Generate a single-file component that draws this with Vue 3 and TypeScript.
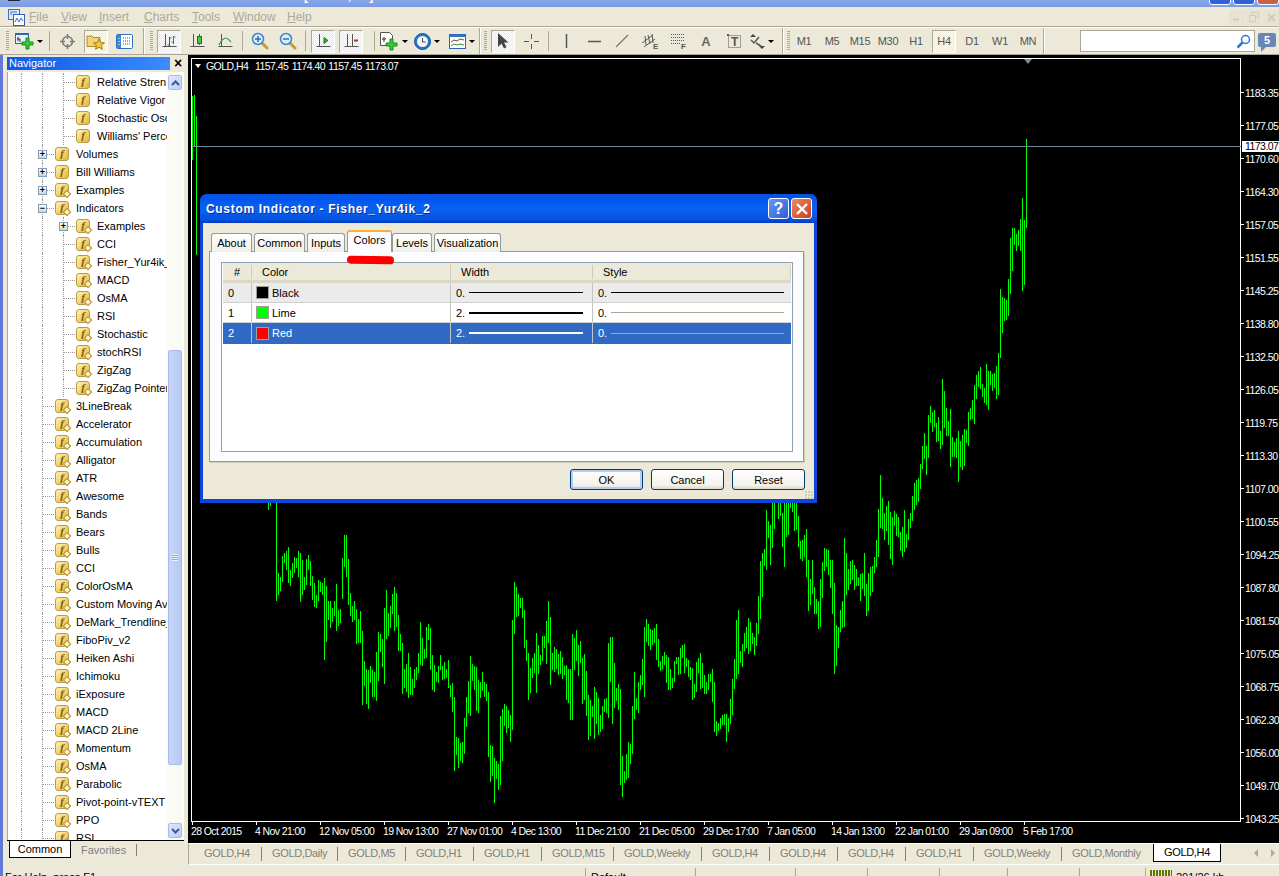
<template>
  <div class="terminal">
    <div class="titlebar">
      <span class="title-icon"></span>
      <span class="title-text">[GOLD,H4]</span>
      <div class="win-btns"><i></i><i></i><i class="red"></i></div>
    </div>

    <div class="menubar">
      <svg class="app-icon" width="17" height="17" viewBox="0 0 17 17">
        <rect x="0.5" y="0.5" width="11" height="10" fill="#dfe9fb" stroke="#3a6fc4" />
        <rect x="5.5" y="5.5" width="11" height="11" fill="#fff" stroke="#2f5fb0" />
        <path d="M7 13l2-4 2 4 2-4 2 3" fill="none" stroke="#2f6fc8" />
        <path d="M2 3h7M2 5h2" stroke="#3a6fc4" />
      </svg>
      <span v-for="m in menus" :key="m" class="menu-item"><u>{{ m[0] }}</u>{{ m.slice(1) }}</span>
      <div class="mdi-btns">
        <span><svg width="8" height="8" viewBox="0 0 8 8"><path d="M0 6.5h6" stroke="#cfccbc" stroke-width="2" /></svg></span>
        <span><svg width="10" height="10" viewBox="0 0 10 10"><path d="M2.5 2.5v-2h7v5h-2M.5 3.5h6v6h-6z" fill="none" stroke="#cfccbc" /></svg></span>
        <span><svg width="9" height="9" viewBox="0 0 9 9"><path d="M1 1l7 7M8 1l-7 7" stroke="#cfccbc" stroke-width="2" /></svg></span>
      </div>
    </div>

    <div class="toolbars">
      <div class="band band-1">
        <span class="grip"></span>
        <span class="tool drop wide-1">
          <svg width="19" height="18" viewBox="0 0 19 18"><rect x="0.5" y="1.5" width="13" height="10" fill="#e8f0fb" stroke="#2c66b8" /><path d="M1 2h12" stroke="#2c66b8" stroke-width="2" /><path d="M3 5v4M5 7v3M2 7h3" stroke="#333" /><path d="M11 6h3v4h4v3h-4v4h-3v-4H7v-3h4z" fill="#3cc63c" stroke="#1a8a1a" /></svg>
          <b class="caret"></b>
        </span>
        <span class="sep"></span>
        <span class="tool">
          <svg width="17" height="17" viewBox="0 0 17 17" fill="none" stroke="#7d7d7d"><circle cx="8.5" cy="8.5" r="5" stroke-width="1.6" /><path d="M8.5 1v5M8.5 11v5M1 8.5h5M11 8.5h5" stroke-width="1.6" /></svg>
        </span>
        <span class="tool on push">
          <svg width="20" height="18" viewBox="0 0 20 18"><path d="M1 4h5l1 1.500h7v9H1z" fill="#f4d372" stroke="#b08a2a" /><path d="M13 7l1.600 3.600 3.900.3-3 2.600.9 3.800-3.400-2-3.400 2 .9-3.800-3-2.600 3.900-.3z" fill="#f2c641" stroke="#a27c1c" /></svg>
        </span>
        <span class="tool">
          <svg width="17" height="15" viewBox="0 0 17 15"><rect x="0.500" y="0.500" width="16" height="14" rx="1" fill="#fff" stroke="#2c6fc0" /><rect x="1" y="1" width="4" height="13" fill="#3a86d8" /><path d="M7 4h7M7 7h7M7 10h7" stroke="#555" stroke-dasharray="1 1" /><path d="M3 4v1M3 7v1M3 10v1" stroke="#fff" /></svg>
        </span>
      </div>
      <span class="divider"></span>
      <div class="band band-2">
        <span class="grip"></span>
        <span class="tool on">
          <svg width="15" height="17" viewBox="0 0 15 17" fill="none"><path d="M3.500 1v13M.5 13.500h14" stroke="#555" /><path d="M7.500 4v9M5.500 12h2M7.500 5h2" stroke="#555" /><path d="M11.500 3v8M9.500 9h2M11.500 4h2" stroke="#1a9a1a" /></svg>
        </span>
        <span class="tool">
          <svg width="15" height="17" viewBox="0 0 15 17" fill="none"><path d="M3.500 1v13M.5 13.500h14" stroke="#555" /><path d="M9.500 1v11" stroke="#555" /><rect x="7.500" y="3.500" width="4" height="7" fill="#46c246" stroke="#1a7a1a" /></svg>
        </span>
        <span class="tool">
          <svg width="15" height="17" viewBox="0 0 15 17" fill="none"><path d="M3.500 1v13M.5 13.500h14" stroke="#555" /><path d="M1 12c3-6 5-7 7-7s3 2 5 4" stroke="#2a9a5a" stroke-width="1.200" /></svg>
        </span>
        <span class="sep"></span>
        <span class="tool">
          <svg width="18" height="18" viewBox="0 0 18 18"><path d="M11 11l5 5" stroke="#c89a30" stroke-width="3" stroke-linecap="round" /><circle cx="7" cy="7" r="5.500" fill="#dcecfb" stroke="#3a86c8" stroke-width="1.500" /><path d="M4 7h6M7 4v6" stroke="#2a6fb8" stroke-width="1.500" /></svg>
        </span>
        <span class="tool">
          <svg width="18" height="18" viewBox="0 0 18 18"><path d="M11 11l5 5" stroke="#c89a30" stroke-width="3" stroke-linecap="round" /><circle cx="7" cy="7" r="5.500" fill="#dcecfb" stroke="#3a86c8" stroke-width="1.500" /><path d="M4 7h6" stroke="#2a6fb8" stroke-width="1.500" /></svg>
        </span>
        <span class="sep"></span>
        <span class="tool on">
          <svg width="15" height="17" viewBox="0 0 15 17" fill="none"><path d="M3.500 1v13M.5 13.500h14" stroke="#555" /><path d="M8 4.500l4 3-4 3z" fill="#35b035" stroke="#1a7a1a" /></svg>
        </span>
        <span class="tool on">
          <svg width="15" height="17" viewBox="0 0 15 17" fill="none"><path d="M3.500 1v13M8.500 1v13M.5 13.500h14" stroke="#555" /><path d="M10 7.500h4" stroke="#b03030" stroke-width="2" /></svg>
        </span>
        <span class="sep sep-far"></span>
        <span class="tool drop wide-2">
          <svg width="19" height="19" viewBox="0 0 19 19"><path d="M.5.500h9l3 3v10H.5z" fill="#fff" stroke="#555" /><path d="M4 5v5M2 7h4" stroke="#333" /><path d="M10 7h3v4h4v3h-4v4h-3v-4H6v-3h4z" fill="#3cc63c" stroke="#1a8a1a" /></svg>
          <b class="caret"></b>
        </span>
        <span class="tool drop wide-3">
          <svg width="17" height="17" viewBox="0 0 17 17"><circle cx="8.500" cy="8.500" r="8" fill="#1f78c8" stroke="#155a9a" /><circle cx="8.500" cy="8.500" r="5.500" fill="#f4f4f4" /><path d="M8.500 5v4h3" fill="none" stroke="#444" /></svg>
          <b class="caret"></b>
        </span>
        <span class="tool drop wide-4">
          <svg width="17" height="15" viewBox="0 0 17 15"><rect x="0.500" y="0.500" width="16" height="14" fill="#fff" stroke="#2c66b8" /><rect x="1" y="1" width="15" height="2" fill="#2c78c8" /><path d="M2 8l3-2 3 1 3-2 4 1" fill="none" stroke="#a03020" /><path d="M2 12l3-2 3 1 3-1 4 1" fill="none" stroke="#2a9a2a" /></svg>
          <b class="caret"></b>
        </span>
      </div>
      <span class="divider"></span>
      <div class="band band-3">
        <span class="grip"></span>
        <span class="tool on">
          <svg width="11" height="16" viewBox="0 0 11 16"><path d="M0 0v14l3.500-3.500 2.500 5 2.500-1.200-2.500-4.800h4.500z" fill="#444" /></svg>
        </span>
        <span class="tool">
          <svg width="17" height="17" viewBox="0 0 17 17"><path d="M8.500 1v5M8.500 11v5M1 8.500h5M11 8.500h5" stroke="#555" /></svg>
        </span>
        <span class="sep"></span>
        <span class="tool"><svg width="3" height="14" viewBox="0 0 3 14"><path d="M1.500 0v14" stroke="#555" stroke-width="1.500" /></svg></span>
        <span class="tool"><svg width="13" height="3" viewBox="0 0 13 3"><path d="M0 1.500h13" stroke="#555" stroke-width="1.500" /></svg></span>
        <span class="tool"><svg width="14" height="14" viewBox="0 0 14 14"><path d="M1 13L13 1" stroke="#777" stroke-width="1.300" /></svg></span>
        <span class="tool">
          <svg width="18" height="17" viewBox="0 0 18 17" fill="none" stroke="#555"><path d="M1 10L12 2M3 14L14 6M4 3l1 9M7 2l2 9M11 1l1 9" /><text x="12" y="16" class="tool-letter">E</text></svg>
        </span>
        <span class="tool">
          <svg width="18" height="17" viewBox="0 0 18 17" fill="none" stroke="#555" stroke-dasharray="1 1"><path d="M2 1.500h13M2 4.500h13M2 7.500h13M2 10.500h10" /><text x="12" y="16" class="tool-letter" stroke="none">F</text></svg>
        </span>
        <span class="tool"><span class="glyph-a">A</span></span>
        <span class="tool">
          <svg width="14" height="15" viewBox="0 0 14 15" fill="none"><rect x="1.500" y="1.500" width="12" height="12" stroke="#555" stroke-dasharray="1 1" /><rect x="0" y="0" width="2" height="2" fill="#555" /><text x="4" y="12" class="tool-t">T</text></svg>
        </span>
        <span class="tool drop">
          <svg width="15" height="15" viewBox="0 0 15 15"><path d="M3 0l3 3H0zM12 15l3-3H9z" fill="#444" /><path d="M1 6l3 3 5-6M6 9l5 3" fill="none" stroke="#555" stroke-width="1.500" /></svg>
          <b class="caret"></b>
        </span>
      </div>
      <span class="divider"></span>
      <div class="band band-4">
        <span class="grip"></span>
        <span v-for="tf in frames" :key="tf" class="tool tf" :class="{ on: tf === 'H4' }">{{ tf }}</span>
      </div>
      <span class="divider"></span>
      <div class="search-group">
        <div class="search">
          <svg width="15" height="15" viewBox="0 0 15 15" fill="none"><circle cx="9.500" cy="5.500" r="4" stroke="#2c78d8" stroke-width="1.500" /><path d="M6.500 8.500L1.500 13.500" stroke="#2c78d8" stroke-width="2.500" /></svg>
        </div>
        <span class="bubble">5</span>
      </div>
    </div>

    <div class="workspace">
      <aside class="navigator">
        <div class="nav-head"><span class="nav-title">Navigator</span><span class="nav-close">×</span></div>
        <div class="nav-body">
          <div class="tree">
            <div v-for="(row, i) in treeRows" :key="i" class="tree-row">
              <span v-for="c in row.level" :key="c" class="guide" :class="{ link: c === row.level }">
                <b v-if="c === row.level && row.box" class="expander">{{ row.box }}</b>
              </span>
              <span class="f-icon" :class="{ diamond: row.diamond }">f</span>
              <span class="tree-label">{{ row.text }}</span>
            </div>
          </div>
          <div class="scroll">
            <span class="scroll-btn"><svg width="9" height="6" viewBox="0 0 9 6"><path d="M1 5l3.500-3.500L8 5" fill="none" stroke="#3a5a9a" stroke-width="2" /></svg></span>
            <div class="scroll-track"><div class="scroll-thumb"><i></i></div></div>
            <span class="scroll-btn"><svg width="9" height="6" viewBox="0 0 9 6"><path d="M1 1l3.500 3.500L8 1" fill="none" stroke="#3a5a9a" stroke-width="2" /></svg></span>
          </div>
        </div>
        <div class="nav-tabs">
          <span class="nav-tab active">Common</span>
          <span class="nav-tab">Favorites</span>
        </div>
      </aside>

      <main class="chart-side">
        <div class="chart">
          <div class="chart-left">
            <div class="plot">
              <svg class="bars" width="1050" height="764" viewBox="191 58 1050 764">
                <path :d="barsPath" stroke="#00ff00" stroke-width="1" fill="none" shape-rendering="crispEdges" />
              </svg>
              <div class="quote"><b class="quote-caret"></b><span>GOLD,H4&nbsp;&nbsp;1157.45 1174.40 1157.45 1173.07</span></div>
              <b class="shift-mark"></b>
              <i class="bid-line"></i>
            </div>
            <div class="time-axis">
              <span v-for="t in times" :key="t" class="time-label">{{ t }}</span>
            </div>
          </div>
          <div class="price-axis">
            <span v-for="p in prices" :key="p" class="price-label">{{ p }}</span>
            <span class="price-tag">1173.07</span>
          </div>
        </div>
        <div class="chart-tabs">
          <span v-for="(t, i) in chartTabs" :key="i" class="chart-tab" :class="{ active: t.active }" :style="{ width: t.w + 'px' }">{{ t.name }}</span>
          <div class="tab-arrows"><b class="arrow-l"></b><b class="arrow-r"></b></div>
        </div>
      </main>

      <section class="dialog">
        <header class="dlg-title">
          <span class="dlg-caption">Custom Indicator - Fisher_Yur4ik_2</span>
          <span class="dlg-btn help">?</span>
          <span class="dlg-btn close">
            <svg width="12" height="12" viewBox="0 0 12 12"><path d="M1 1l10 10M11 1L1 11" stroke="#fff" stroke-width="2.400" /></svg>
          </span>
        </header>
        <div class="dlg-client">
          <div class="dlg-tabs">
            <span v-for="t in dlgTabs" :key="t" class="dlg-tab" :class="['t-' + t.toLowerCase(), { active: t === 'Colors' }]">{{ t }}</span>
          </div>
          <div class="dlg-panel">
            <div class="list">
              <div class="list-head">
                <span class="cell c-num center">#</span>
                <span class="cell c-name">Color</span>
                <span class="cell c-width">Width</span>
                <span class="cell c-style">Style</span>
              </div>
              <div v-for="(r, i) in colorRows" :key="r.name" class="list-row" :class="r.cls">
                <span class="cell c-num">{{ i }}</span>
                <span class="cell c-name"><i class="swatch" :style="{ background: r.color }"></i>{{ r.name }}</span>
                <span class="cell c-width">{{ r.width }}<i class="line" :class="r.widthCls"></i></span>
                <span class="cell c-style">0.<i class="line" :class="r.styleCls"></i></span>
              </div>
            </div>
          </div>
          <div class="dlg-actions">
            <button class="btn default">OK</button>
            <button class="btn">Cancel</button>
            <button class="btn">Reset</button>
          </div>
          <span class="dlg-grip"></span>
        </div>
        <i class="red-mark"></i>
      </section>
    </div>

    <footer class="statusbar">
      <span v-for="(s, i) in statusCells" :key="i" class="status-cell" :style="{ width: s.w + 'px' }">{{ s.text }}</span>
      <span class="status-cell conn"><i class="conn-bars"></i>201/26 kb</span>
    </footer>
  </div>
</template>

<script setup lang="ts">
const menus = ["File", "View", "Insert", "Charts", "Tools", "Window", "Help"];
const frames = ["M1", "M5", "M15", "M30", "H1", "H4", "D1", "W1", "MN"];
const dlgTabs = ["About", "Common", "Inputs", "Colors", "Levels", "Visualization"];

interface TreeRow { level: number; text: string; diamond: boolean; box?: string }

const row = (level: number, text: string, diamond = true, box?: string): TreeRow => ({ level, text, diamond, box });

const treeRows: TreeRow[] = [
  ...["Relative Stren", "Relative Vigor", "Stochastic Osc", "Williams' Perce"].map((t) => row(3, t, false)),
  row(2, "Volumes", false, "+"),
  row(2, "Bill Williams", false, "+"),
  row(2, "Examples", true, "+"),
  row(2, "Indicators", true, "−"),
  row(3, "Examples", true, "+"),
  ...["CCI", "Fisher_Yur4ik_", "MACD", "OsMA", "RSI", "Stochastic", "stochRSI", "ZigZag", "ZigZag Pointer"].map((t) => row(3, t)),
  ...[
    "3LineBreak", "Accelerator", "Accumulation", "Alligator", "ATR", "Awesome", "Bands", "Bears", "Bulls", "CCI",
    "ColorOsMA", "Custom Moving Av", "DeMark_Trendline_", "FiboPiv_v2", "Heiken Ashi", "Ichimoku", "iExposure",
    "MACD", "MACD 2Line", "Momentum", "OsMA", "Parabolic", "Pivot-point-vTEXT", "PPO", "RSI",
  ].map((t) => row(2, t)),
];

const times = [
  "28 Oct 2015", "4 Nov 21:00", "12 Nov 05:00", "19 Nov 13:00", "27 Nov 01:00", "4 Dec 13:00", "11 Dec 21:00",
  "21 Dec 05:00", "29 Dec 17:00", "7 Jan 05:00", "14 Jan 13:00", "22 Jan 01:00", "29 Jan 09:00", "5 Feb 17:00",
];

const prices = [
  "1183.35", "1177.05", "1170.60", "1164.30", "1157.05", "1151.55", "1145.25", "1138.80", "1132.50", "1126.05",
  "1119.75", "1113.30", "1107.00", "1100.55", "1094.25", "1087.80", "1081.50", "1075.05", "1068.75", "1062.30",
  "1056.00", "1049.70", "1043.25",
];

const chartTabs = [
  { name: "GOLD,H4", w: 68 }, { name: "GOLD,Daily", w: 76 }, { name: "GOLD,M5", w: 68 }, { name: "GOLD,H1", w: 68 },
  { name: "GOLD,H1", w: 68 }, { name: "GOLD,M15", w: 72 }, { name: "GOLD,Weekly", w: 88 }, { name: "GOLD,H4", w: 68 },
  { name: "GOLD,H4", w: 68 }, { name: "GOLD,H4", w: 68 }, { name: "GOLD,H1", w: 68 }, { name: "GOLD,Weekly", w: 88 },
  { name: "GOLD,Monthly", w: 91 }, { name: "GOLD,H4", w: 68, active: true },
];

const colorRows = [
  { name: "Black", color: "#000", cls: "gray", width: "0.", widthCls: "thin-black", styleCls: "thin-black" },
  { name: "Lime", color: "#00ff00", cls: "", width: "2.", widthCls: "thick-black", styleCls: "thin-gray" },
  { name: "Red", color: "#ff0000", cls: "selected", width: "2.", widthCls: "thick-white", styleCls: "thin-gray" },
];

const statusCells = [
  { w: 586, text: "For Help, press F1" }, { w: 110, text: "Default" }, { w: 100, text: "" }, { w: 72, text: "" },
  { w: 72, text: "" }, { w: 68, text: "" }, { w: 72, text: "" }, { w: 66, text: "" },
];

// high/low pairs read off the chart, one bar every 2px
const seriesA = [
  0,303, 219,285, 231,273, 168,246, 159,189, 153,210, 141,249, 210,258, 189,234, 171,219, 174,204, 153,231, 159,306,
  180,285, 231,270, 177,255, 165,210, 183,258, 228,300, 249,321, 285,324, 240,303, 246,276, 249,285, 234,480, 258,426,
  303,360, 303,384, 324,366, 303,348, 252,393, 330,378, 327,369, 174,297, 105,201, 105,231, 177,315, 279,348, 318,366,
  303,360, 327,432, 357,429, 333,429, 393,615, 483,558, 507,612, 510,627, 498,549, 510,591, 516,591, 456,603, 396,543,
  402,456, 417,501, 324,552, 270,417, 339,408, 318,384, 282,342, 261,393, 279,381, 345,453, 402,453, 429,582, 507,564,
  492,576, 459,594, 501,585, 537,585, 507,564, 501,540, 459,519, 366,495, 414,498, 447,477, 381,474, 372,420, 384,510,
  465,570, 495,576, 516,546, 498,549, 465,510, 498,540, 486,537, 507,534, 480,564, 555,591, 549,636, 591,813, 711,765,
  714,804, 729,783, 726,789, 654,762, 591,681, 543,640, 468,648, 492,543, 498,570, 501,633, 540,639, 546,594, 516,573,
  546,591, 552,603, 576,771, 735,846, 738,828, 774,909, 783,837, 792,870,
];
const seriesB = [
  648,855, 627,783, 612,678, 618,699, 630,684, 645,726, 360,690, 246,402, 261,351, 282,348, 294,324, 294,354, 330,444,
  420,483, 459,600, 504,579, 474,534, 459,519, 399,579, 435,522, 465,495, 408,483, 408,444, 363,492, 303,429, 351,555,
  459,510, 441,516, 447,507, 462,525, 453,522, 471,537, 498,525, 495,600, 507,609, 507,660, 402,660, 414,510, 390,483,
  435,528, 423,489, 474,612, 462,600, 513,648, 585,720, 600,708, 618,651, 561,717, 576,672, 594,705, 645,696, 618,687,
  597,636, 594,639, 429,654, 411,546, 411,672, 489,624, 564,603, 552,630, 567,855, 768,891, 813,849, 762,840, 726,834,
  732,792, 618,762, 516,657, 594,630, 546,639, 525,570, 477,555, 381,591, 357,426, 372,438, 387,450, 390,435, 384,429,
  372,480, 417,501, 483,513, 468,507, 456,495, 465,549, 471,570, 507,570, 534,564, 483,546, 471,492, 471,525, 444,522,
  435,474, 432,519, 474,501, 480,531, 501,540, 504,600, 552,594, 486,576, 474,519, 459,567, 489,564, 525,582, 546,582,
  522,570, 522,546, 507,606, 546,696, 663,708, 669,693, 654,687, 645,675, 642,675, 642,726, 654,696, 597,672, 537,645,
  477,567, 360,537, 330,522, 453,489, 432,501, 399,453, 381,444, 354,462, 366,453, 399,432, 411,465, 369,438, 288,402,
  183,357, 159,291, 147,198, 30,210, 63,114, 75,195, 0,144, 0,87, 0,0, 0,57, 0,48, 39,141, 0,201, 0,111, 0,105, 0,24,
  0,36, 0,93, 0,90, 48,141, 123,177, 120,183, 105,171, 87,231, 180,333,
];
const seriesC = [
  1257,1329, 1204,1299, 1280,1355, 1313,1355, 1320,1398, 1257,1392, 1210,1310, 1170,1236, 1173,1224, 1176,1245, 1204,1282,
  1204,1355, 1268,1522, 1386,1500, 1392,1450, 1344,1406, 1320,1395, 1142,1392, 1184,1302, 1229,1288, 1207,1272, 1204,1260,
  1218,1288, 1229,1276, 1252,1277, 1243,1319, 1240,1285, 1184,1305, 1271,1361, 1240,1347, 1224,1305, 1221,1294, 1196,1240,
  1148,1224, 1061,1196, 966,1114, 1030,1117, 1072,1148, 1053,1123, 1039,1162, 1070,1201, 1084,1218, 1067,1109, 1075,1137,
  1084,1140, 1126,1179, 1112,1196, 1064,1182, 1131,1170, 1089,1148, 1072,1114, 1025,1095, 988,1064, 980,1050, 974,1042,
  935,1005, 885,949, 848,921, 885,966, 798,918, 773,820, 790,845, 784,832, 820,874, 804,871, 843,893, 697,882, 731,834,
  778,857, 815,857, 781,944, 860,916, 874,916, 862,918, 843,986, 871,944, 854,952, 837,941, 840,876, 790,885, 778,812,
  756,809, 714,823, 686,753, 675,720, 664,725, 711,748, 722,764, 655,770, 675,784, 675,714, 683,731, 680,722, 661,753,
  624,742, 445,638, 468,568, 470,535, 476,532, 417,521, 302,459, 274,395, 274,322, 291,339, 280,325, 249,339, 190,451,
  252,434, 25,274,
];

function seriesPath(data: number[], startX: number, y0: number, scale: number): string {
  let d = "";
  for (let i = 0; i < data.length; i += 2) {
    const x = startX + i + 0.5;
    d += `M${x} ${Math.round(y0 + data[i] / scale)}V${Math.round(y0 + data[i + 1] / scale)}`;
  }
  return d;
}

const barsPath =
  "M192.5 96V160M194.5 95V146M196.5 116V255M268.5 500V510M270.5 500V506" +
  seriesPath(seriesA, 276, 500, 3) +
  seriesPath(seriesB, 500, 500, 3) +
  seriesPath(seriesC, 810, 130, 2.8);
</script>

<style>
html,
body {
  margin: 0;
  background: #ece9d8;
}
</style>

<style scoped>
.terminal {
  width: 1279px;
  height: 876px;
  overflow: hidden;
  position: relative;
  display: flex;
  flex-direction: column;
  background: #ece9d8;
  font-family: "Liberation Sans", Arial, sans-serif;
  font-size: 11px;
  color: #000;
}

/* title bar, only its bottom edge is in the shot */
.titlebar {
  height: 7px;
  flex: none;
  position: relative;
  background: linear-gradient(#86a8e8, #7b9be0);
  overflow: hidden;
}
.title-icon {
  position: absolute;
  left: 8px;
  top: 0;
  width: 12px;
  height: 1px;
  background: #223;
}
.title-text {
  position: absolute;
  left: 304px;
  top: -11px;
  color: #fff;
  font-size: 12px;
  font-weight: bold;
  letter-spacing: 1px;
}
.win-btns {
  position: absolute;
  right: 0;
  top: -18px;
  display: flex;
  gap: 2px;
}
.win-btns i {
  width: 20px;
  height: 21px;
  border: 1px solid #fff;
  border-radius: 3px;
  background: #2f62d8;
}
.win-btns i.red {
  background: #c8604a;
}

.menubar {
  height: 18px;
  flex: none;
  display: flex;
  align-items: center;
  position: relative;
  border-bottom: 1px solid #aca899;
  padding-top: 1px;
}
.app-icon {
  margin-left: 8px;
}
.menu-item {
  color: #aca899;
  font-size: 12px;
  position: absolute;
  top: 3px;
}
.menu-item:nth-of-type(1) { left: 29px; }
.menu-item:nth-of-type(2) { left: 61px; }
.menu-item:nth-of-type(3) { left: 99px; }
.menu-item:nth-of-type(4) { left: 144px; }
.menu-item:nth-of-type(5) { left: 192px; }
.menu-item:nth-of-type(6) { left: 233px; }
.menu-item:nth-of-type(7) { left: 287px; }
.mdi-btns {
  margin-left: auto;
  display: flex;
  gap: 1px;
}
.mdi-btns span {
  width: 16px;
  height: 15px;
  background: #e6e3d2;
  display: flex;
  align-items: center;
  justify-content: center;
}

.toolbars {
  height: 26px;
  flex: none;
  display: flex;
  align-items: center;
  border-top: 1px solid #fff;
  border-bottom: 1px solid #aca899;
}
.band {
  display: flex;
  align-items: center;
  gap: 4px;
  height: 100%;
  box-sizing: border-box;
}
.band-1 { width: 143px; padding-left: 6px; }
.band-2 { width: 334px; padding-left: 5px; }
.band-3 { width: 301px; padding-left: 3px; }
.band-4 { width: 259px; padding-left: 3px; }
.band-4 .grip { margin-right: -2px; }
.divider {
  width: 1px;
  height: 100%;
  background: #aca899;
  border-right: 1px solid #fff;
  flex: none;
}
.grip {
  width: 3px;
  height: 20px;
  background: repeating-linear-gradient(#aca899 0 1px, #ece9d8 1px 2px);
}
.tool {
  width: 24px;
  height: 23px;
  box-sizing: border-box;
  display: flex;
  align-items: center;
  justify-content: center;
  flex: none;
}
.tool.on {
  border: 1px solid;
  border-color: #aca899 #fff #fff #aca899;
  background: repeating-conic-gradient(#fff 0 25%, #ece9d8 0 50%) 0 0 / 2px 2px;
}
.tool.push {
  margin-left: 1px;
}
.tool.drop {
  justify-content: flex-start;
  gap: 3px;
}
.wide-1 { width: 31px; padding-left: 2px; }
.wide-2 { width: 28px; }
.wide-3 { width: 29px; padding-left: 2px; }
.wide-4 { width: 32px; padding-left: 4px; }
.caret {
  width: 0;
  height: 0;
  border: 3px solid transparent;
  border-top: 3px solid #000;
  border-bottom: 0;
}
.sep {
  width: 1px;
  height: 20px;
  background: #aca899;
  margin: 0 1px;
  flex: none;
}
.sep-far {
  margin-left: 7px;
}
.tool-letter {
  font-family: "Liberation Sans", Arial, sans-serif;
  font-size: 8px;
  font-weight: bold;
  fill: #555;
  stroke: none;
}
.tool-t {
  font-family: "Liberation Sans", Arial, sans-serif;
  font-size: 12px;
  font-weight: bold;
  fill: #555;
  stroke: none;
}
.glyph-a {
  font-size: 13px;
  font-weight: bold;
  color: #666;
}
.tf {
  color: #555;
  font-size: 11px;
  letter-spacing: -0.3px;
}
.search-group {
  margin-left: auto;
  display: flex;
  align-items: center;
  gap: 3px;
  padding-right: 3px;
}
.search {
  width: 175px;
  height: 22px;
  box-sizing: border-box;
  border: 1px solid #aca899;
  background: #fff;
  display: flex;
  align-items: center;
  justify-content: flex-end;
  padding-right: 3px;
}
.bubble {
  width: 18px;
  height: 14px;
  margin-bottom: 3px;
  background: #6a86b4;
  color: #fff;
  font-weight: bold;
  font-size: 11px;
  line-height: 14px;
  text-align: center;
  border-radius: 2px;
  position: relative;
}
.bubble::after {
  content: "";
  position: absolute;
  left: 3px;
  top: 13px;
  border: 3px solid transparent;
  border-top-color: #6a86b4;
  border-left-color: #6a86b4;
}

.workspace {
  flex: 1;
  min-height: 0;
  display: flex;
  position: relative;
}

/* navigator */
.navigator {
  width: 188px;
  flex: none;
  box-sizing: border-box;
  padding: 2px 4px 0 7px;
  display: flex;
  flex-direction: column;
  position: relative;
}
.navigator::before {
  content: "";
  position: absolute;
  left: 0;
  top: 0;
  bottom: -12px;
  width: 3px;
  background: #6478d8;
}
.nav-head {
  height: 13px;
  display: flex;
  align-items: center;
  position: relative;
  flex: none;
}
.nav-title {
  width: 163px;
  height: 13px;
  line-height: 13px;
  padding-left: 2px;
  box-sizing: border-box;
  background: linear-gradient(90deg, #0a5ae6, #3b8cff);
  color: #fff;
  font-size: 11px;
}
.nav-close {
  margin-left: 4px;
  font-size: 14px;
  font-weight: bold;
  line-height: 13px;
}
.nav-body {
  flex: 1;
  min-height: 0;
  margin-top: 2px;
  display: flex;
  background: #fff;
  border-left: 1px solid #aca899;
  border-right: 1px solid #fff;
}
.tree {
  width: 159px;
  flex: none;
  overflow: hidden;
  padding-top: 1px;
}
.tree-row {
  height: 18px;
  display: flex;
  align-items: center;
  white-space: nowrap;
  padding-left: 3px;
}
.guide {
  width: 21px;
  height: 18px;
  flex: none;
  position: relative;
}
.guide::before {
  content: "";
  position: absolute;
  left: 10px;
  top: 0;
  bottom: 0;
  border-left: 1px dotted #999;
}
.guide.link::after {
  content: "";
  position: absolute;
  left: 10px;
  top: 9px;
  width: 12px;
  border-top: 1px dotted #999;
}
.expander {
  position: absolute;
  z-index: 1;
  left: 6px;
  top: 5px;
  width: 9px;
  height: 9px;
  box-sizing: border-box;
  border: 1px solid #7f9db9;
  background: linear-gradient(#fff, #d8d4c4);
  font-weight: bold;
  font-size: 9px;
  line-height: 6px;
  text-align: center;
  color: #000;
}
.f-icon {
  width: 14px;
  height: 14px;
  margin: 0 7px 0 2px;
  flex: none;
  box-sizing: border-box;
  position: relative;
  border: 1px solid #b89a48;
  border-radius: 3px;
  background: linear-gradient(135deg, #fff3b8, #f2cf62 60%, #e3b53e);
  font-family: "Liberation Serif", serif;
  font-style: italic;
  font-weight: bold;
  font-size: 11px;
  line-height: 11px;
  text-align: center;
  color: #7a5a10;
}
.f-icon.diamond::after {
  content: "";
  position: absolute;
  right: -2px;
  bottom: -1px;
  width: 4px;
  height: 4px;
  background: #fff3c0;
  border: 1px solid #b08a2a;
  transform: rotate(45deg);
}
.tree-label {
  color: #000;
}
.scroll {
  width: 16px;
  flex: none;
  display: flex;
  flex-direction: column;
  align-items: center;
  background: #fbfbf6;
  padding: 3px 0 2px;
  box-sizing: border-box;
}
.scroll-btn {
  width: 14px;
  height: 15px;
  box-sizing: border-box;
  flex: none;
  border: 1px solid #a8bce8;
  border-radius: 2px;
  background: linear-gradient(135deg, #dfe8fc, #bccdf6);
  display: flex;
  align-items: center;
  justify-content: center;
}
.scroll-track {
  flex: 1;
  width: 14px;
  padding-top: 260px;
  box-sizing: border-box;
}
.scroll-thumb {
  height: 415px;
  box-sizing: border-box;
  border: 1px solid #a8bce8;
  border-radius: 2px;
  background: linear-gradient(90deg, #c8d6f8, #b6c8f4);
  display: flex;
  align-items: center;
  justify-content: center;
}
.scroll-thumb i {
  width: 6px;
  height: 7px;
  background: repeating-linear-gradient(#eef3fe 0 1px, #8ea6dc 1px 2px);
}
.nav-tabs {
  height: 24px;
  flex: none;
  display: flex;
  align-items: flex-start;
  border-top: 1px solid #000;
  padding-left: 2px;
}
.nav-tab {
  box-sizing: border-box;
  color: #808080;
  margin-top: 3px;
  height: 12px;
  line-height: 12px;
  padding: 0 10px;
  border-right: 1px solid #808080;
}
.nav-tab.active {
  width: 62px;
  margin-top: 0;
  padding: 0;
  height: 17px;
  background: #fff;
  color: #000;
  border: 1px solid #000;
  border-top: 0;
  line-height: 16px;
  text-align: center;
}

/* chart */
.chart-side {
  flex: 1;
  min-width: 0;
  display: flex;
  flex-direction: column;
}
.chart {
  height: 788px;
  flex: none;
  background: #000;
  display: flex;
  padding: 3px 0 0 3px;
  box-sizing: border-box;
  color: #fff;
  font-size: 10.5px;
  overflow: hidden;
}
.chart-left {
  width: 1050px;
  flex: none;
}
.plot {
  height: 764px;
  box-sizing: border-box;
  border: 1px solid #fff;
  position: relative;
}
.bars {
  position: absolute;
  left: -1px;
  top: -1px;
}
.quote {
  position: absolute;
  left: 3px;
  top: 1px;
  display: flex;
  align-items: center;
  gap: 5px;
  white-space: pre;
  letter-spacing: -0.55px;
  word-spacing: 1px;
}
.quote-caret {
  border: 3px solid transparent;
  border-top: 4px solid #fff;
  border-bottom: 0;
}
.shift-mark {
  position: absolute;
  left: 832px;
  top: 0;
  border: 4px solid transparent;
  border-top: 5px solid #778899;
  border-bottom: 0;
}
.bid-line {
  position: absolute;
  left: 0;
  right: -1px;
  top: 87px;
  height: 1px;
  background: #778899;
}
.time-axis {
  display: flex;
  padding-left: 1px;
}
.time-label {
  width: 64px;
  flex: none;
  padding-top: 3px;
  position: relative;
  white-space: nowrap;
  letter-spacing: -0.6px;
  line-height: 12px;
  text-indent: -1px;
}
.time-label::before {
  content: "";
  position: absolute;
  left: 0;
  top: 0;
  width: 1px;
  height: 3px;
  background: #fff;
}
.price-axis {
  flex: 1;
  min-width: 0;
  position: relative;
  padding-top: 18px;
  display: flex;
  flex-direction: column;
}
.price-label {
  height: 33px;
  flex: none;
  display: flex;
  align-items: center;
  letter-spacing: -0.55px;
  padding-left: 4px;
  position: relative;
}
.price-label::before {
  content: "";
  position: absolute;
  left: 0;
  top: 16px;
  width: 3px;
  height: 1px;
  background: #fff;
}
.price-tag {
  position: absolute;
  left: 1px;
  top: 83px;
  height: 11px;
  line-height: 11px;
  width: 37px;
  padding-left: 3px;
  box-sizing: border-box;
  background: #fff;
  color: #000;
  letter-spacing: -0.55px;
}
.chart-tabs {
  flex: 1;
  display: flex;
  align-items: flex-start;
  padding-left: 5px;
  border-left: 1px solid #aca899;
  border-top: 1px solid #fff;
  border-bottom: 1px solid #fff;
  position: relative;
}
.chart-tab {
  height: 14px;
  margin-top: 3px;
  box-sizing: border-box;
  line-height: 12px;
  padding-left: 10px;
  color: #808080;
  border-right: 1px solid #808080;
  white-space: nowrap;
  flex: none;
  font-size: 11px;
  letter-spacing: -0.35px;
}
.chart-tab:nth-last-child(3) {
  border-right: 0;
}
.chart-tab.active {
  height: 18px;
  margin-top: 0;
  background: #fff;
  color: #000;
  border: 1px solid #000;
  border-top: 0;
  line-height: 17px;
  text-align: center;
  padding: 0;
}
.tab-arrows {
  margin-left: auto;
  display: flex;
  gap: 13px;
  padding: 5px 4px 0 0;
}
.arrow-l {
  border: 4px solid transparent;
  border-right: 4px solid #aca899;
  border-left: 0;
}
.arrow-r {
  border: 4px solid transparent;
  border-left: 4px solid #aca899;
  border-right: 0;
}

/* dialog, floats over the chart */
.dialog {
  position: absolute;
  left: 200px;
  top: 139px;
  width: 617px;
  height: 309px;
  box-sizing: border-box;
  display: flex;
  flex-direction: column;
  border-radius: 7px 7px 0 0;
  background: #0a46d8;
  padding: 0 3px 4px;
  z-index: 2;
}
.dlg-title {
  height: 29px;
  flex: none;
  margin: 0 -3px;
  padding: 0 5px 0 6px;
  display: flex;
  align-items: center;
  border-radius: 7px 7px 0 0;
  background: linear-gradient(#0a50e0, #0058f0 20%, #0a62f4 55%, #0450dc 90%, #0038c0);
}
.dlg-caption {
  flex: 1;
  color: #fff;
  font-weight: bold;
  font-size: 12px;
  letter-spacing: 0.68px;
  text-shadow: 1px 1px #0a2a90;
}
.dlg-btn {
  width: 21px;
  height: 21px;
  box-sizing: border-box;
  margin-left: 2px;
  border: 1px solid #fff;
  border-radius: 3px;
  display: flex;
  align-items: center;
  justify-content: center;
}
.dlg-btn.help {
  background: linear-gradient(135deg, #6a98f4, #2a5ed8);
  color: #fff;
  font-size: 16px;
  font-weight: bold;
}
.dlg-btn.close {
  background: linear-gradient(135deg, #e88a68, #c8401e);
}
.dlg-client {
  flex: 1;
  background: #ece9d8;
  display: flex;
  flex-direction: column;
  position: relative;
  padding: 0 7px 0 6px;
}
.dlg-tabs {
  display: flex;
  height: 29px;
  align-items: flex-end;
  gap: 2px;
  flex: none;
  padding-left: 2px;
  margin-bottom: -1px;
  position: relative;
  z-index: 1;
}
.dlg-tab {
  height: 19px;
  box-sizing: border-box;
  border: 1px solid #919b9c;
  border-bottom: 0;
  border-radius: 3px 3px 0 0;
  background: linear-gradient(#fff, #f0efe6);
  text-align: center;
  line-height: 18px;
  flex: none;
}
.t-about { width: 41px; }
.t-common { width: 51px; }
.t-inputs { width: 38px; }
.t-colors { width: 45px; margin: 0 -2px 0 0; }
.t-levels { width: 40px; }
.t-visualization { width: 67px; }
.dlg-tab.active {
  height: 22px;
  background: #fcfcfe;
  border-top: 2px solid #f8b030;
  line-height: 17px;
}
.dlg-panel {
  height: 211px;
  flex: none;
  box-sizing: border-box;
  border: 1px solid #919b9c;
  background: #fcfcfe;
  box-shadow: 1px 1px 0 #d0cdb8;
  padding: 10px 10px 9px 11px;
  margin-right: 3px;
}
.list {
  height: 100%;
  box-sizing: border-box;
  border: 1px solid #8ca0b0;
  background: #fff;
  padding: 0 1px 1px;
}
.list-head,
.list-row {
  display: flex;
  align-items: center;
}
.list-head {
  height: 20px;
  box-sizing: border-box;
  padding-bottom: 2px;
  background: #ece9d8;
  box-shadow: inset 0 -3px 0 #dcd8c6;
}
.list-row {
  height: 20px;
  box-sizing: border-box;
  border-bottom: 1px solid #cfcfcf;
}
.list-row.gray {
  background: #ebebeb;
}
.list-row.selected {
  background: #316ac5;
  color: #fff;
  border-bottom: 1px solid #316ac5;
  height: 21px;
}
.cell {
  height: 100%;
  display: flex;
  align-items: center;
  box-sizing: border-box;
  flex: none;
  white-space: nowrap;
}
.list-head .cell {
  border-right: 1px solid #cfccba;
  height: 14px;
}
.list-row .cell {
  border-right: 1px solid #c4c4c4;
}
.c-num { width: 29px; padding-left: 5px; }
.c-num.center { justify-content: center; padding-left: 0; }
.c-name { width: 199px; padding-left: 4px; gap: 3px; }
.list-head .c-name { padding-left: 10px; }
.c-width { width: 142px; padding-left: 5px; gap: 4px; }
.list-head .c-width { padding-left: 10px; }
.c-style { width: 198px; padding-left: 5px; gap: 4px; }
.list-head .c-style { padding-left: 10px; }
.list-row .c-style { border-right: 0; }
.swatch {
  width: 13px;
  height: 13px;
  box-sizing: border-box;
  border: 1px solid #a0a09a;
  flex: none;
}
.line {
  flex: 1;
  display: block;
}
.c-width .line { margin-right: 9px; }
.c-style .line { margin-right: 7px; }
.thin-black { height: 1px; background: #000; }
.thick-black { height: 2px; background: #000; }
.thick-white { height: 2px; background: #fff; }
.thin-gray { height: 1px; background: #aca899; }
.dlg-actions {
  flex: 1;
  display: flex;
  align-items: flex-start;
  justify-content: flex-end;
  gap: 8px;
  padding: 7px 2px 0 0;
}
.btn {
  width: 73px;
  height: 21px;
  padding: 0;
  box-sizing: border-box;
  border: 1px solid #003c74;
  border-radius: 3px;
  background: linear-gradient(#fff, #f3f2ec 80%, #dcd8c8);
  font: 11px "Liberation Sans", Arial, sans-serif;
  color: #000;
}
.btn.default {
  box-shadow: inset 0 0 0 2px #b6cdf0;
}
.dlg-grip {
  position: absolute;
  right: 1px;
  bottom: 0;
  width: 8px;
  height: 8px;
  background: radial-gradient(circle at 1px 1px, #cfccb8 1px, transparent 1px) 0 0 / 3px 3px;
}
.red-mark {
  position: absolute;
  left: 147px;
  top: 62px;
  width: 47px;
  height: 8px;
  border-radius: 4px;
  background: #fb0000;
  transform: rotate(1deg);
  z-index: 3;
}

.statusbar {
  height: 11px;
  box-sizing: border-box;
  flex: none;
  display: flex;
  padding-top: 3px;
  overflow: hidden;
}
.status-cell {
  box-sizing: border-box;
  flex: none;
  height: 30px;
  border-right: 1px solid #aca899;
  padding: 2px 0 0 5px;
  line-height: 14px;
  white-space: nowrap;
}
.status-cell.conn {
  border: 0;
  display: flex;
  gap: 4px;
  padding-left: 4px;
  align-items: flex-start;
}
.conn-bars {
  width: 22px;
  height: 12px;
  background: repeating-linear-gradient(90deg, #5a7a00 0 2px, #ece9d8 2px 3px);
}
</style>
